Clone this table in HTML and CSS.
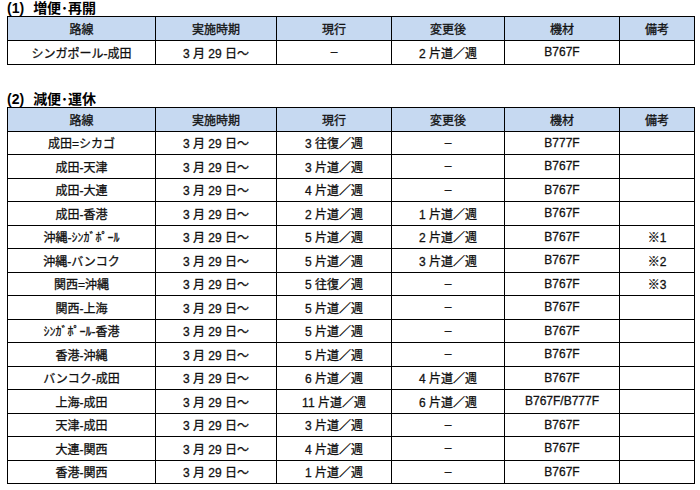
FILE: index.html
```html
<!DOCTYPE html>
<html lang="ja">
<head>
<meta charset="utf-8">
<link rel="stylesheet" href="styles.css">
</head>
<body>
<div class="page">
  <h2 class="title t1">(1)<span class="tname">増便･再開</span></h2>
  <table class="grid">
    <colgroup><col class="c1"><col class="c2"><col class="c3"><col class="c4"><col class="c5"><col class="c6"></colgroup>
    <thead><tr><th>路線</th><th>実施時期</th><th>現行</th><th>変更後</th><th>機材</th><th>備考</th></tr></thead>
    <tbody>
      <tr><td>シンガポール-成田</td><td>3 月 29 日～</td><td>–</td><td>2 片道／週</td><td>B767F</td><td></td></tr>
    </tbody>
  </table>

  <h2 class="title t2">(2)<span class="tname">減便･運休</span></h2>
  <table class="grid">
    <colgroup><col class="c1"><col class="c2"><col class="c3"><col class="c4"><col class="c5"><col class="c6"></colgroup>
    <thead><tr><th>路線</th><th>実施時期</th><th>現行</th><th>変更後</th><th>機材</th><th>備考</th></tr></thead>
    <tbody>
      <tr><td>成田=シカゴ</td><td>3 月 29 日～</td><td>3 往復／週</td><td>–</td><td>B777F</td><td></td></tr>
      <tr><td>成田-天津</td><td>3 月 29 日～</td><td>3 片道／週</td><td>–</td><td>B767F</td><td></td></tr>
      <tr><td>成田-大連</td><td>3 月 29 日～</td><td>4 片道／週</td><td>–</td><td>B767F</td><td></td></tr>
      <tr><td>成田-香港</td><td>3 月 29 日～</td><td>2 片道／週</td><td>1 片道／週</td><td>B767F</td><td></td></tr>
      <tr><td>沖縄-ｼﾝｶﾞﾎﾟｰﾙ</td><td>3 月 29 日～</td><td>5 片道／週</td><td>2 片道／週</td><td>B767F</td><td>※1</td></tr>
      <tr><td>沖縄-バンコク</td><td>3 月 29 日～</td><td>5 片道／週</td><td>3 片道／週</td><td>B767F</td><td>※2</td></tr>
      <tr><td>関西=沖縄</td><td>3 月 29 日～</td><td>5 往復／週</td><td>–</td><td>B767F</td><td>※3</td></tr>
      <tr><td>関西-上海</td><td>3 月 29 日～</td><td>5 片道／週</td><td>–</td><td>B767F</td><td></td></tr>
      <tr><td>ｼﾝｶﾞﾎﾟｰﾙ-香港</td><td>3 月 29 日～</td><td>5 片道／週</td><td>–</td><td>B767F</td><td></td></tr>
      <tr><td>香港-沖縄</td><td>3 月 29 日～</td><td>5 片道／週</td><td>–</td><td>B767F</td><td></td></tr>
      <tr><td>バンコク-成田</td><td>3 月 29 日～</td><td>6 片道／週</td><td>4 片道／週</td><td>B767F</td><td></td></tr>
      <tr><td>上海-成田</td><td>3 月 29 日～</td><td>11 片道／週</td><td>6 片道／週</td><td>B767F/B777F</td><td></td></tr>
      <tr><td>天津-成田</td><td>3 月 29 日～</td><td>3 片道／週</td><td>–</td><td>B767F</td><td></td></tr>
      <tr><td>大連-関西</td><td>3 月 29 日～</td><td>4 片道／週</td><td>–</td><td>B767F</td><td></td></tr>
      <tr><td>香港-関西</td><td>3 月 29 日～</td><td>1 片道／週</td><td>–</td><td>B767F</td><td></td></tr>
    </tbody>
  </table>
</div>
</body>
</html>
```
FILE: styles.css
```css
html, body {
  margin: 0;
  padding: 0;
  background: #ffffff;
}
.page {
  padding: 0 7px;
  font-family: "Liberation Sans", "Noto Sans CJK JP", sans-serif;
  color: #111;
}
.title {
  margin: 0;
  font-size: 14px;
  font-weight: bold;
  line-height: 16px;
  height: 16px;
  color: #000;
}
.tname {
  margin-left: 9px;
}
.t2 {
  margin-top: 26px;
}
.grid {
  border-collapse: collapse;
  table-layout: fixed;
  width: 687px;
  font-size: 12px;
  -webkit-text-stroke: 0.3px #111;
}
.c1 { width: 148px; }
.c2 { width: 121px; }
.c3 { width: 115px; }
.c4 { width: 113px; }
.c5 { width: 115px; }
.c6 { width: 75px; }
.grid th, .grid td {
  border: 1px solid #000;
  text-align: center;
  padding: 0;
  white-space: nowrap;
}
.grid th {
  background: #c6d9f1;
  font-weight: normal;
  height: 23px;
}
.grid td {
  height: 22.5px;
}
```
